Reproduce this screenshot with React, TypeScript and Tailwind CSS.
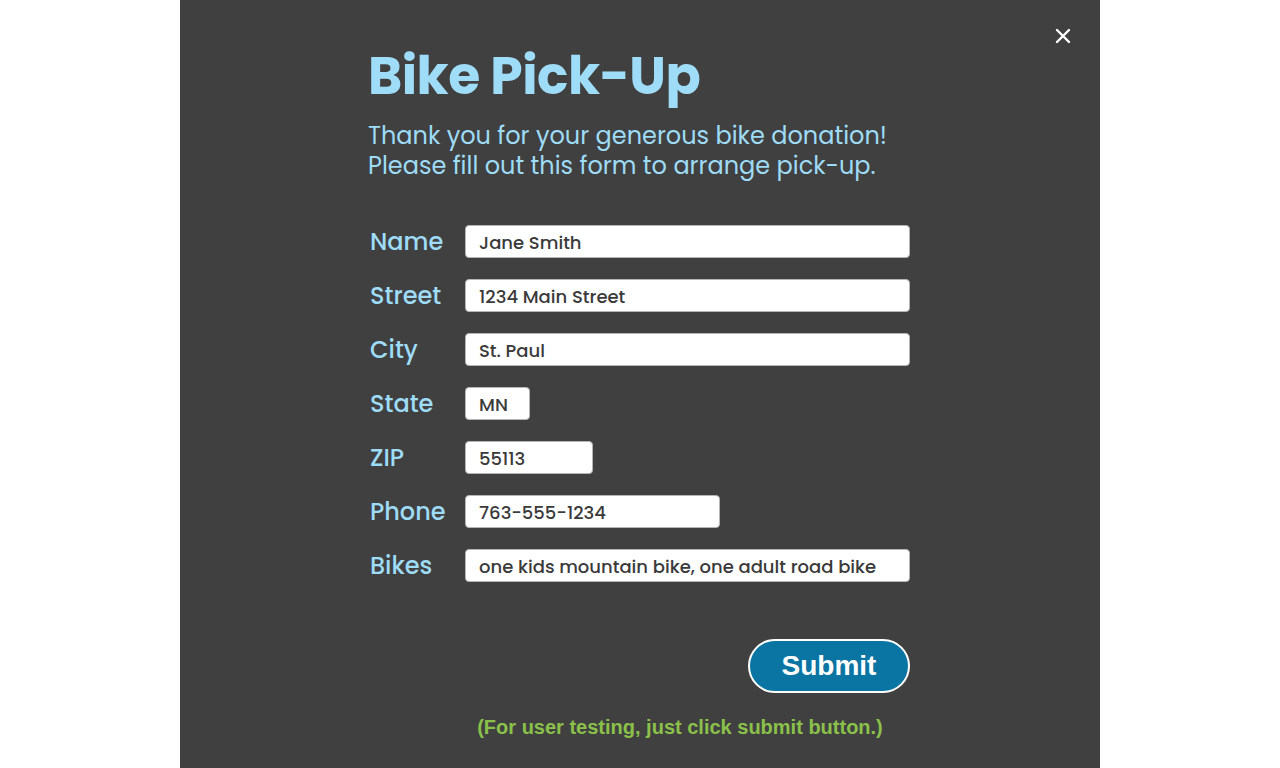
import React from 'react';

const fields = [
    { label: 'Name', value: 'Jane Smith', width: 'w-[445px]' },
    { label: 'Street', value: '1234 Main Street', width: 'w-[445px]' },
    { label: 'City', value: 'St. Paul', width: 'w-[445px]' },
    { label: 'State', value: 'MN', width: 'w-[65px]' },
    { label: 'ZIP', value: '55113', width: 'w-[128px]' },
    { label: 'Phone', value: '763-555-1234', width: 'w-[255px]' },
    { label: 'Bikes', value: 'one kids mountain bike, one adult road bike', width: 'w-[445px]' },
];

const App = () => {
    return (
        <div className="min-h-screen bg-white flex justify-center">
            <div className="w-[920px] h-[768px] bg-[#404040] relative font-['Poppins','Inter',sans-serif]">
                <button className="absolute right-[27px] top-[26px] text-white">
                    <svg width="20" height="20" viewBox="0 0 20 20">
                        <path d="M4 4 L16 16 M16 4 L4 16" stroke="white" strokeWidth="2.4" strokeLinecap="round" />
                    </svg>
                </button>

                <div className="w-[542px] ml-[188px] pt-[44px]">
                    <h1 className="text-[52px] leading-[64px] font-bold text-[#9edcf7] tracking-[-0.5px]">Bike Pick-Up</h1>
                    <p className="mt-[13px] text-[24px] leading-[30px] text-[#9edcf7]">
                        Thank you for your generous bike donation!<br />
                        Please fill out this form to arrange pick-up.
                    </p>

                    <div className="mt-[44px] flex flex-col gap-[21px]">
                        {fields.map((f) => (
                            <div key={f.label} className="flex items-center h-[33px]">
                                <label className="w-[97px] pl-[2px] text-[24px] leading-[33px] font-medium text-[#9edcf7]">{f.label}</label>
                                <div className={`${f.width} h-[33px] bg-white rounded-[4px] border border-[#b5b5b5] flex items-center pl-[13px] pt-[2px] text-[18px] font-medium text-[#3a3a3a]`}>
                                    {f.value}
                                </div>
                            </div>
                        ))}
                    </div>

                    <div className="mt-[57px] flex justify-end">
                        <button className="w-[162px] h-[54px] rounded-full bg-[#0a75a3] border-2 border-white text-white text-[28px] font-bold font-['Liberation_Sans',Arial,sans-serif]">
                            Submit
                        </button>
                    </div>

                    <p className="mt-[19px] text-center text-[20px] font-bold text-[#8bc04a] font-['Liberation_Sans',Arial,sans-serif] pl-[82px]">
                        (For user testing, just click submit button.)
                    </p>
                </div>
            </div>
        </div>
    );
};

export default App;
